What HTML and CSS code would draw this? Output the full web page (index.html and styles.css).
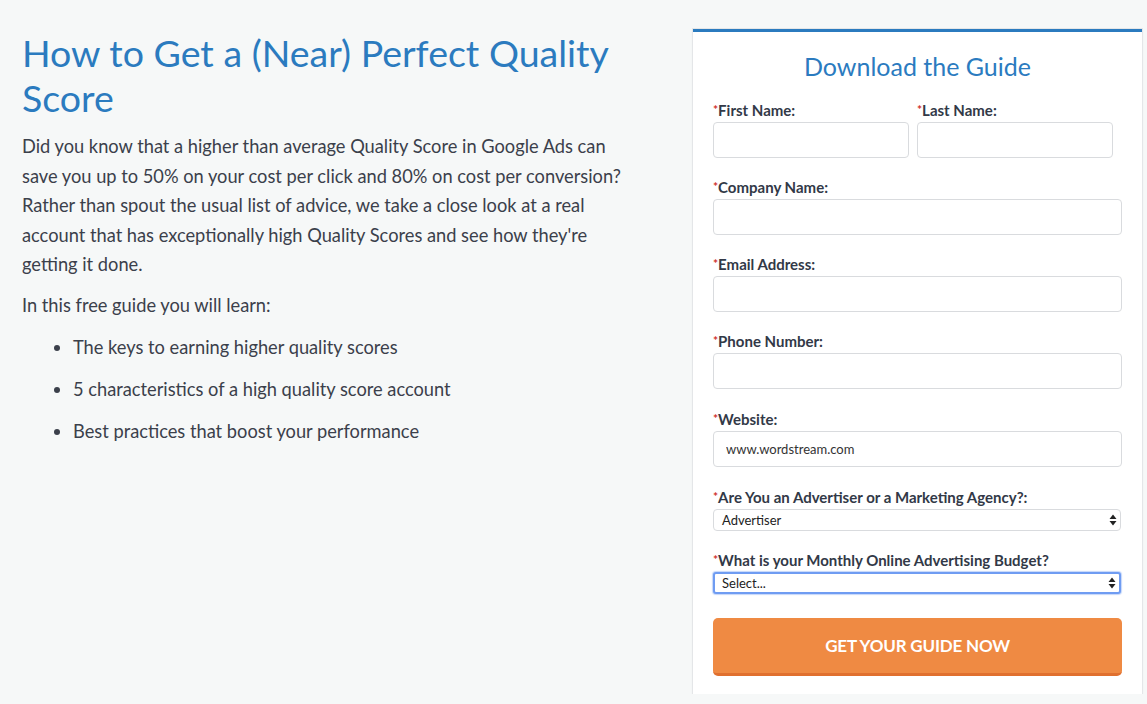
FILE: index.html
```html
<!DOCTYPE html>
<html lang="en">
<head>
<meta charset="utf-8">
<title>How to Get a (Near) Perfect Quality Score</title>
<link rel="stylesheet" href="styles.css">
</head>
<body>
<div class="page">
  <section class="intro">
    <h1 class="title">How to Get a (Near) Perfect Quality Score</h1>
    <p class="text">Did you know that a higher than average Quality Score in Google Ads can save you up to 50% on your cost per click and 80% on cost per conversion? Rather than spout the usual list of advice, we take a close look at a real account that has exceptionally high Quality Scores and see how they're getting it done.</p>
    <p class="text">In this free guide you will learn:</p>
    <ul class="list">
      <li>The keys to earning higher quality scores</li>
      <li>5 characteristics of a high quality score account</li>
      <li>Best practices that boost your performance</li>
    </ul>
  </section>
  <aside class="panel">
    <h2 class="panel-title">Download the Guide</h2>
    <form class="form">
      <div class="row">
        <div class="field half">
          <label class="label"><span class="req">*</span>First Name:</label>
          <input class="input" type="text">
        </div>
        <div class="field half">
          <label class="label"><span class="req">*</span>Last Name:</label>
          <input class="input" type="text">
        </div>
      </div>
      <div class="field">
        <label class="label"><span class="req">*</span>Company Name:</label>
        <input class="input" type="text">
      </div>
      <div class="field">
        <label class="label"><span class="req">*</span>Email Address:</label>
        <input class="input" type="text">
      </div>
      <div class="field wide-gap">
        <label class="label"><span class="req">*</span>Phone Number:</label>
        <input class="input" type="text">
      </div>
      <div class="field wide-gap">
        <label class="label"><span class="req">*</span>Website:</label>
        <input class="input" type="text" value="www.wordstream.com">
      </div>
      <div class="field">
        <label class="label"><span class="req">*</span>Are You an Advertiser or a Marketing Agency?:</label>
        <div class="select">
          <span class="select-text">Advertiser</span>
          <svg class="arrows" width="8" height="12" viewBox="0 0 8 12"><path d="M4 0.5 L7.5 5 H0.5 Z M4 11.5 L7.5 7 H0.5 Z" fill="#222"/></svg>
        </div>
      </div>
      <div class="field last">
        <label class="label"><span class="req">*</span>What is your Monthly Online Advertising Budget?</label>
        <div class="select focus">
          <span class="select-text">Select...</span>
          <svg class="arrows" width="8" height="12" viewBox="0 0 8 12"><path d="M4 0.5 L7.5 5 H0.5 Z M4 11.5 L7.5 7 H0.5 Z" fill="#222"/></svg>
        </div>
      </div>
      <button class="button" type="button">GET YOUR GUIDE NOW</button>
    </form>
  </aside>
</div>
</body>
</html>
```

FILE: styles.css
```css
* { box-sizing: border-box; }
html, body {
  margin: 0;
  padding: 0;
  background: #f6f8f8;
  font-family: Lato, "Open Sans", sans-serif;
  color: #3b404b;
}
.page {
  display: flex;
  align-items: flex-start;
  padding: 29px 5px 0 22px;
}
.intro {
  width: 622px;
  margin-right: 49px;
}
.title {
  margin: 1px 0 0;
  font-weight: 400;
  font-size: 37.5px;
  line-height: 45px;
  color: #2b7bbf;
}
.text {
  margin: 12px 0 11px;
  font-size: 18.25px;
  line-height: 29.6px;
}
.text + .text { margin-top: 11px; }
.list {
  margin: 0;
  padding: 0 0 0 51px;
  font-size: 18.25px;
  line-height: 30px;
}
.list li {
  margin-bottom: 12px;
}
.panel {
  width: 449px;
  height: 665px;
  background: #fff;
  border-top: 3px solid #2b7bbf;
  box-shadow: 0 0 0 1px #e4e6e8, 0 1px 3px rgba(0,0,0,0.06);
  padding: 20px 20px 19px;
}
.panel-title {
  margin: -1px 0 20px;
  text-align: center;
  font-weight: 400;
  font-size: 25px;
  line-height: 30px;
  color: #2b7bbf;
}
.form {
  display: flex;
  flex-direction: column;
}
.row {
  display: flex;
  gap: 8px;
}
.field {
  display: flex;
  flex-direction: column;
  margin-bottom: 20px;
}
.field.wide-gap { margin-bottom: 21px; }
.field.last { margin-bottom: 24px; }
.half { width: 196px; }
.label {
  display: block;
  height: 18px;
  font-size: 15px;
  font-weight: 700;
  line-height: 18px;
  color: #323947;
  margin-bottom: 3px;
  white-space: nowrap;
}
.req {
  color: #d0312d;
  font-size: 12px;
  line-height: 1;
  position: relative;
  top: -2px;
}
.input {
  height: 36px;
  width: 100%;
  border: 1px solid #d9dbde;
  border-radius: 4px;
  padding: 0 12px;
  font-family: Lato, sans-serif;
  font-size: 13px;
  color: #333;
  background: #fff;
  outline: none;
}
.select {
  position: relative;
  height: 22px;
  border: 1px solid #d9dbde;
  border-radius: 4px;
  background: #fff;
  display: flex;
  align-items: center;
  padding: 0 8px;
  font-size: 13px;
  color: #222;
  margin-right: 1px;
}
.select.focus {
  border: 2px solid #6f9cf2;
  border-radius: 3px;
  padding: 0 7px;
  box-shadow: 0 0 1px 1px rgba(111,156,242,0.4);
}
.select-text { line-height: 18px; }
.arrows {
  position: absolute;
  right: 3px;
  top: 50%;
  margin-top: -6px;
}
.button {
  height: 58px;
  width: 100%;
  border: none;
  border-bottom: 3px solid #e0702f;
  border-radius: 5px;
  background: #ef8a43;
  color: #fff;
  font-family: Lato, sans-serif;
  font-weight: 700;
  font-size: 17px;
  letter-spacing: -0.2px;
  cursor: pointer;
}
```
